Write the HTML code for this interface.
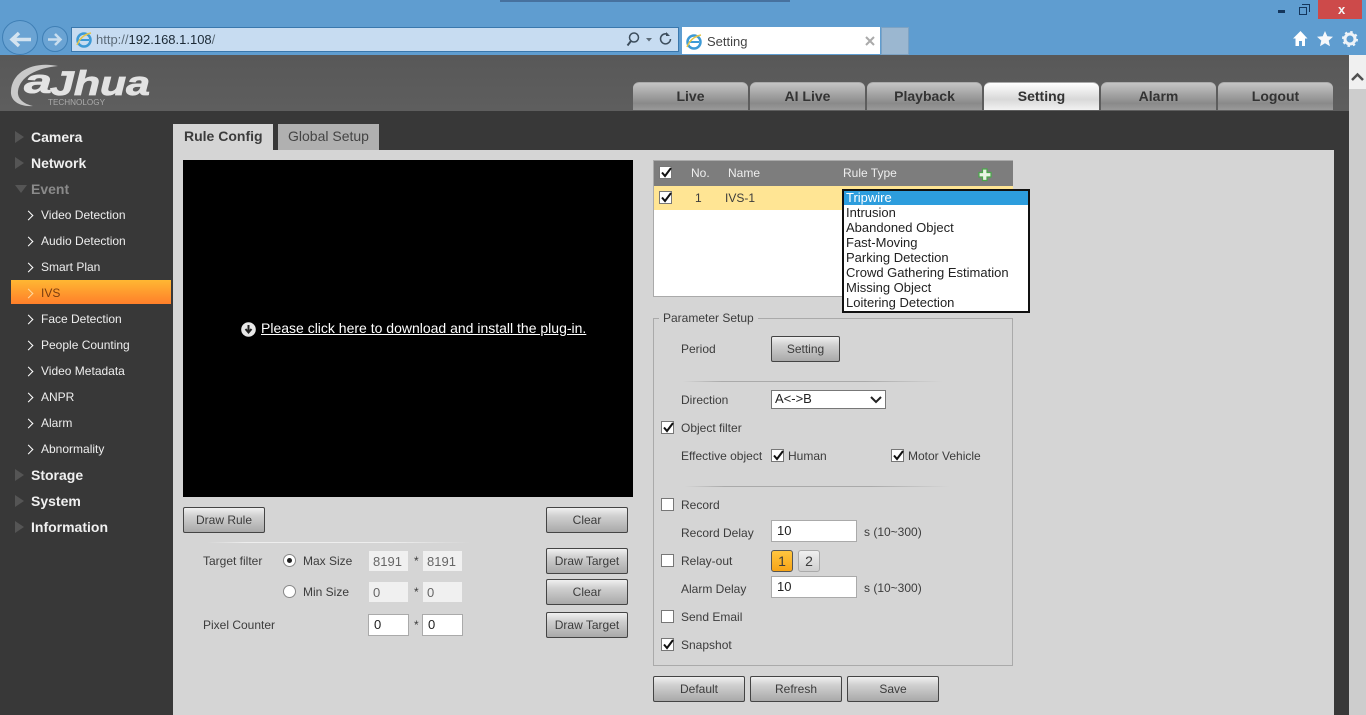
<!DOCTYPE html>
<html><head><meta charset="utf-8"><style>
html,body{margin:0;padding:0;width:1366px;height:715px;overflow:hidden;background:#383838}
body{position:relative;font-family:"Liberation Sans",sans-serif;font-size:12px;color:#3c3c3c}
.a,.t,.b,.cb,.i{position:absolute}
.t{white-space:nowrap;line-height:14px}
.m{font-size:14px;font-weight:bold;color:#f0f0f0;left:31px}
.s{font-size:12px;color:#eee;left:41px}
.b{box-sizing:border-box;border:1px solid #444;border-radius:2px;background:linear-gradient(#f0f0f0,#cfcfcf 35%,#a9a9a9);text-align:center;line-height:24px;height:26px;color:#3c3c3c}
.nav{position:absolute;top:82px;height:28px;width:115px;box-sizing:border-box;border-radius:6px 6px 0 0;background:linear-gradient(#c4c4c4,#8a8a8a 75%,#999);text-align:center;font-weight:bold;font-size:14px;line-height:27px;color:#333;border-top:1px solid #aaa}
.cb{box-sizing:border-box;width:13px;height:13px;background:#fff;border:1px solid #777}
.cb svg{position:absolute;left:0;top:-1px}
.i{box-sizing:border-box;background:#fff;border:1px solid #aaa;color:#222;height:22px;line-height:20px;padding-left:5px;font-size:13px}
.d{background:#f0f0f0;border:0;color:#666}
.ar{position:absolute;left:25px;width:6px;height:6px;border-top:1.5px solid #fff;border-right:1.5px solid #fff;transform:rotate(45deg)}
.tri{position:absolute;left:15px;width:0;height:0;border-left:9px solid #555;border-top:6px solid transparent;border-bottom:6px solid transparent}
.hr{position:absolute;height:1px;background:linear-gradient(90deg,#d5d5d5,#aaa 15%,#aaa 70%,#d5d5d5)}
.o{line-height:15px;height:15px;padding-left:2px;font-size:13px;color:#222}
</style></head><body>
<!-- browser chrome -->
<div class="a" style="left:0;top:0;width:1366px;height:55px;background:#5f9dd0"></div>
<div class="a" style="left:500px;top:0;width:290px;height:2px;background:#47719e"></div>
<div class="a" style="left:2px;top:20px;width:36px;height:35px;border:1px solid #3f7fb5;border-radius:50%;box-sizing:border-box;background:#6aa3d3"></div>
<div class="a" style="left:42px;top:26px;width:26px;height:26px;border:1px solid #3f7fb5;border-radius:50%;box-sizing:border-box;background:#6aa3d3"></div>
<svg class="a" style="left:0;top:0" width="80" height="55"><path d="M31 39.500H12M19 33l-7 6.500 7 6.500" fill="none" stroke="#d3e3f0" stroke-width="3.500"/><path d="M48 39.500h12M55 34l5.500 5.500L55 45" fill="none" stroke="#c9deef" stroke-width="2.500"/></svg>
<div class="a" style="left:71px;top:27px;width:608px;height:25px;background:#c7dcf1;border:1px solid #3a78ad;box-sizing:border-box"></div>
<svg class="a" style="left:75px;top:30px" width="18" height="19"><ellipse cx="9" cy="10" rx="6.500" ry="6.500" fill="none" stroke="#3d9ad6" stroke-width="2.500"/><path d="M4 10h10" stroke="#3d9ad6" stroke-width="2"/><path d="M2 15Q6 5 16 3" fill="none" stroke="#e5c64a" stroke-width="1.500"/></svg>
<div class="t" style="left:96px;top:33px;font-size:13px;color:#5c6b78">http://<span style="color:#1c2a36">192.168.1.108</span>/</div>
<svg class="a" style="left:624px;top:30px" width="50" height="19"><circle cx="10" cy="7.500" r="4.500" fill="none" stroke="#3d4e5d" stroke-width="1.500"/><path d="M7 11l-3.500 4.500" stroke="#3d4e5d" stroke-width="2"/><path d="M22 8h6l-3 3.500z" fill="#5c6b78"/><path d="M44 4.500a5 5 0 1 0 2.500 4.500" fill="none" stroke="#3d4e5d" stroke-width="1.500"/><path d="M42 2v4h4z" fill="#3d4e5d"/></svg>
<div class="a" style="left:682px;top:27px;width:198px;height:27px;background:#fff"></div>
<svg class="a" style="left:685px;top:32px" width="18" height="19"><ellipse cx="9" cy="10" rx="6.500" ry="6.500" fill="none" stroke="#3d9ad6" stroke-width="2.500"/><path d="M4 10h10" stroke="#3d9ad6" stroke-width="2"/><path d="M2 15Q6 5 16 3" fill="none" stroke="#e5c64a" stroke-width="1.500"/></svg>
<div class="t" style="left:707px;top:35px;font-size:13px;color:#444">Setting</div>
<svg class="a" style="left:865px;top:36px" width="10" height="10"><path d="M1 1l8 8M9 1l-8 8" stroke="#aaa" stroke-width="2"/></svg>
<div class="a" style="left:881px;top:27px;width:28px;height:28px;background:#9bb7d0;border:1px solid #7da3c4;box-sizing:border-box"></div>
<div class="a" style="left:1278px;top:10px;width:7px;height:3px;background:#14365c"></div>
<div class="a" style="left:1299px;top:7px;width:8px;height:8px;border:1.500px solid #14365c;box-sizing:border-box"></div>
<div class="a" style="left:1302px;top:4px;width:8px;height:8px;border-top:1.500px solid #14365c;border-right:1.500px solid #14365c;box-sizing:border-box"></div>
<div class="a" style="left:1318px;top:0;width:44px;height:19px;background:#cd4a4a"></div>
<div class="t" style="left:1338px;top:3px;font-size:13px;font-weight:bold;color:#f4f4f4">x</div>
<svg class="a" style="left:1292px;top:30px" width="68" height="18"><path d="M1 8.500 8.500 1l7 7.500h-2.500V16H10v-5H7v5H3.500V8.500z" fill="#fff"/><path d="M33 1l2.300 5.200 5.700.6-4.300 3.800 1.300 5.600-5-3-5 3 1.300-5.600L25 6.800l5.700-.6z" fill="#f6f8fb"/><circle cx="58" cy="9" r="5" fill="none" stroke="#eef3f8" stroke-width="3"/><circle cx="58" cy="9" r="7" fill="none" stroke="#eef3f8" stroke-width="2" stroke-dasharray="2.500 3"/></svg>

<!-- header -->
<div class="a" style="left:0;top:55px;width:1349px;height:56px;background:linear-gradient(#585858,#5e5e5e)"></div>
<svg class="a" style="left:0;top:55px" width="170" height="56">
<defs><linearGradient id="g" x1="0" y1="0" x2="0" y2="1"><stop offset="0" stop-color="#fbfbfb"/><stop offset="1" stop-color="#a4a4a4"/></linearGradient></defs>
<path d="M58 11C34 6 12 16 11 36 10 46 20 52 33 51 24 49 17 44 18 36 20 22 36 13 58 11z" fill="#c9c9c9"/>
<text x="24" y="38" font-family="Liberation Sans" font-weight="bold" font-style="italic" font-size="34" fill="#e4e4e4" stroke="#e4e4e4" stroke-width=".6" textLength="28" lengthAdjust="spacingAndGlyphs">a</text>
<text x="50" y="40" font-family="Liberation Sans" font-weight="bold" font-style="italic" font-size="34" fill="#e2e2e2" stroke="#e2e2e2" stroke-width=".8" textLength="100" lengthAdjust="spacingAndGlyphs">Jhua</text>
<text x="48" y="50" font-family="Liberation Sans" font-size="8.500" fill="#aaa" textLength="57" lengthAdjust="spacingAndGlyphs">TECHNOLOGY</text>
</svg>
<div class="nav" style="left:633px">Live</div>
<div class="nav" style="left:750px">AI Live</div>
<div class="nav" style="left:867px">Playback</div>
<div class="nav" style="left:984px;background:linear-gradient(#fff,#d8d8d8 60%,#f2f2f2)">Setting</div>
<div class="nav" style="left:1101px">Alarm</div>
<div class="nav" style="left:1218px">Logout</div>

<!-- scrollbar -->
<div class="a" style="left:1349px;top:55px;width:17px;height:660px;background:#f0f0f0"></div>
<div class="a" style="left:1349px;top:89px;width:17px;height:626px;background:#cdcdcd"></div>
<svg class="a" style="left:1349px;top:70px" width="17" height="14"><path d="M3 10l5.500-5.500L14 10" fill="none" stroke="#505050" stroke-width="2.500"/></svg>

<!-- left menu -->
<div class="tri" style="top:131px"></div><div class="t m" style="top:130px">Camera</div>
<div class="tri" style="top:157px"></div><div class="t m" style="top:156px">Network</div>
<div class="a" style="left:15px;top:185px;width:0;height:0;border-top:8px solid #555;border-left:6px solid transparent;border-right:6px solid transparent"></div><div class="t m" style="top:182px;color:#8a8a8a">Event</div>
<div class="a" style="left:11px;top:280px;width:160px;height:24px;background:linear-gradient(#ffb733,#ff7f2a)"></div>
<div class="ar" style="top:212px"></div><div class="t s" style="top:208px">Video Detection</div>
<div class="ar" style="top:238px"></div><div class="t s" style="top:234px">Audio Detection</div>
<div class="ar" style="top:264px"></div><div class="t s" style="top:260px">Smart Plan</div>
<div class="ar" style="top:290px;border-color:#ffd9a0"></div><div class="t s" style="top:286px;color:#7a3d10">IVS</div>
<div class="ar" style="top:316px"></div><div class="t s" style="top:312px">Face Detection</div>
<div class="ar" style="top:342px"></div><div class="t s" style="top:338px">People Counting</div>
<div class="ar" style="top:368px"></div><div class="t s" style="top:364px">Video Metadata</div>
<div class="ar" style="top:394px"></div><div class="t s" style="top:390px">ANPR</div>
<div class="ar" style="top:420px"></div><div class="t s" style="top:416px">Alarm</div>
<div class="ar" style="top:446px"></div><div class="t s" style="top:442px">Abnormality</div>
<div class="tri" style="top:469px"></div><div class="t m" style="top:468px">Storage</div>
<div class="tri" style="top:495px"></div><div class="t m" style="top:494px">System</div>
<div class="tri" style="top:521px"></div><div class="t m" style="top:520px">Information</div>

<!-- content -->
<div class="a" style="left:173px;top:150px;width:1161px;height:565px;background:#d5d5d5"></div>
<div class="a" style="left:173px;top:124px;width:100px;height:26px;background:#d5d5d5"></div>
<div class="t" style="left:184px;top:129px;font-size:14px;font-weight:bold;color:#3c3c3c">Rule Config</div>
<div class="a" style="left:278px;top:124px;width:101px;height:26px;background:#b0b0b0"></div>
<div class="t" style="left:288px;top:129px;font-size:14px;color:#444">Global Setup</div>

<!-- video -->
<div class="a" style="left:183px;top:160px;width:450px;height:337px;background:#000"></div>
<svg class="a" style="left:241px;top:322px" width="15" height="15"><circle cx="7.500" cy="7.500" r="7.300" fill="#e8e8e8"/><path d="M7.500 3v6M4.500 7l3 3.500 3-3.500" fill="none" stroke="#222" stroke-width="2"/></svg>
<div class="t" style="left:261px;top:321px;font-size:14px;color:#fff;text-decoration:underline">Please click here to download and install the plug-in.</div>

<!-- below video -->
<div class="b" style="left:183px;top:507px;width:82px">Draw Rule</div>
<div class="b" style="left:546px;top:507px;width:82px">Clear</div>
<div class="a" style="left:207px;top:542px;width:263px;height:1px;background:linear-gradient(90deg,#d5d5d5,#eee 15%,#eee 70%,#d5d5d5)"></div>
<div class="t" style="left:203px;top:554px">Target filter</div>
<div class="a" style="left:283px;top:554px;width:13px;height:13px;border:1px solid #888;border-radius:50%;background:#fff;box-sizing:border-box"></div>
<div class="a" style="left:287px;top:558px;width:5px;height:5px;border-radius:50%;background:#222"></div>
<div class="t" style="left:303px;top:554px">Max Size</div>
<div class="i d" style="left:369px;top:551px;width:39px;height:20px;line-height:21px;padding-left:4px">8191</div>
<div class="t" style="left:414px;top:554px">*</div>
<div class="i d" style="left:423px;top:551px;width:39px;height:20px;line-height:21px;padding-left:4px">8191</div>
<div class="a" style="left:283px;top:585px;width:13px;height:13px;border:1px solid #888;border-radius:50%;background:#fff;box-sizing:border-box"></div>
<div class="t" style="left:303px;top:585px">Min Size</div>
<div class="i d" style="left:369px;top:582px;width:39px;height:20px;line-height:21px;padding-left:4px">0</div>
<div class="t" style="left:414px;top:585px">*</div>
<div class="i d" style="left:423px;top:582px;width:39px;height:20px;line-height:21px;padding-left:4px">0</div>
<div class="t" style="left:203px;top:618px">Pixel Counter</div>
<div class="i" style="left:368px;top:614px;width:41px">0</div>
<div class="t" style="left:414px;top:618px">*</div>
<div class="i" style="left:422px;top:614px;width:41px">0</div>
<div class="b" style="left:546px;top:548px;width:82px">Draw Target</div>
<div class="b" style="left:546px;top:579px;width:82px">Clear</div>
<div class="b" style="left:546px;top:612px;width:82px">Draw Target</div>

<!-- rule table -->
<div class="a" style="left:653px;top:160px;width:360px;height:137px;background:#fff;border:1px solid #aaa;box-sizing:border-box"></div>
<div class="a" style="left:654px;top:161px;width:359px;height:25px;background:#7d7d7d"></div>
<div class="a" style="left:654px;top:186px;width:359px;height:24px;background:#ffe594"></div>
<div class="cb" style="left:659px;top:166px"><svg width="13" height="13"><path d="M2 6.500l3 3.500 6-8" fill="none" stroke="#111" stroke-width="2"/></svg></div>
<div class="t" style="left:691px;top:166px;color:#eee">No.</div>
<div class="t" style="left:728px;top:166px;color:#eee">Name</div>
<div class="t" style="left:843px;top:166px;color:#eee">Rule Type</div>
<svg class="a" style="left:978px;top:168px" width="14" height="14"><path d="M4.500 1h4.500v3.500H13V9H9v3.500H4.500V9H1V4.500h3.500z" fill="#eaf5e6" stroke="#4aa84a" stroke-width="1.200"/></svg>
<div class="cb" style="left:659px;top:191px;background:#fff"><svg width="13" height="13"><path d="M2 6.500l3 3.500 6-8" fill="none" stroke="#111" stroke-width="2"/></svg></div>
<div class="t" style="left:695px;top:191px">1</div>
<div class="t" style="left:725px;top:191px">IVS-1</div>

<!-- dropdown -->
<div class="a" style="left:842px;top:189px;width:188px;height:124px;box-sizing:border-box;border:2px solid #111;background:#fff">
<div class="o" style="background:#2d9ddd;color:#fff;height:14px;line-height:13px">Tripwire</div>
<div class="o">Intrusion</div><div class="o">Abandoned Object</div><div class="o">Fast-Moving</div><div class="o">Parking Detection</div><div class="o">Crowd Gathering Estimation</div><div class="o">Missing Object</div><div class="o">Loitering Detection</div>
</div>

<!-- parameter setup -->
<div class="a" style="left:653px;top:318px;width:360px;height:348px;border:1px solid #aaa;box-sizing:border-box"></div>
<div class="t" style="left:659px;top:311px;background:#d5d5d5;padding:0 4px">Parameter Setup</div>
<div class="t" style="left:681px;top:342px">Period</div>
<div class="b" style="left:771px;top:336px;width:69px">Setting</div>
<div class="hr" style="left:683px;top:381px;width:260px"></div>
<div class="t" style="left:681px;top:393px">Direction</div>
<div class="a" style="left:771px;top:390px;width:115px;height:19px;background:#fff;border:1px solid #777;box-sizing:border-box;font-size:13px;line-height:15px;padding-left:3px;color:#222">A&lt;-&gt;B</div>
<svg class="a" style="left:869px;top:395px" width="14" height="10"><path d="M2 2l5 5 5-5" fill="none" stroke="#222" stroke-width="2"/></svg>

<div class="cb" style="left:661px;top:421px"><svg width="13" height="13"><path d="M2 6.500l3 3.500 6-8" fill="none" stroke="#111" stroke-width="2"/></svg></div>
<div class="t" style="left:681px;top:421px">Object filter</div>
<div class="t" style="left:681px;top:449px">Effective object</div>
<div class="cb" style="left:771px;top:449px"><svg width="13" height="13"><path d="M2 6.500l3 3.500 6-8" fill="none" stroke="#111" stroke-width="2"/></svg></div>
<div class="t" style="left:788px;top:449px">Human</div>
<div class="cb" style="left:891px;top:449px"><svg width="13" height="13"><path d="M2 6.500l3 3.500 6-8" fill="none" stroke="#111" stroke-width="2"/></svg></div>
<div class="t" style="left:908px;top:449px">Motor Vehicle</div>
<div class="hr" style="left:685px;top:486px;width:265px"></div>
<div class="cb" style="left:661px;top:498px"></div>
<div class="t" style="left:681px;top:498px">Record</div>
<div class="t" style="left:681px;top:526px">Record Delay</div>
<div class="i" style="left:771px;top:520px;width:86px">10</div>
<div class="t" style="left:864px;top:525px">s (10~300)</div>
<div class="cb" style="left:661px;top:554px"></div>
<div class="t" style="left:681px;top:554px">Relay-out</div>
<div class="a" style="left:771px;top:550px;width:22px;height:22px;box-sizing:border-box;border:1px solid #555;border-radius:3px;background:linear-gradient(#ffc640,#f7a416);text-align:center;line-height:21px;font-size:14px">1</div>
<div class="a" style="left:798px;top:550px;width:22px;height:22px;box-sizing:border-box;border:1px solid #aaa;border-radius:3px;background:linear-gradient(#f0f0f0,#cfcfcf);text-align:center;line-height:20px;font-size:14px">2</div>
<div class="t" style="left:681px;top:582px">Alarm Delay</div>
<div class="i" style="left:771px;top:576px;width:86px">10</div>
<div class="t" style="left:864px;top:581px">s (10~300)</div>
<div class="cb" style="left:661px;top:610px"></div>
<div class="t" style="left:681px;top:610px">Send Email</div>
<div class="cb" style="left:661px;top:638px"><svg width="13" height="13"><path d="M2 6.500l3 3.500 6-8" fill="none" stroke="#111" stroke-width="2"/></svg></div>
<div class="t" style="left:681px;top:638px">Snapshot</div>
<div class="b" style="left:653px;top:676px;width:92px">Default</div>
<div class="b" style="left:750px;top:676px;width:92px">Refresh</div>
<div class="b" style="left:847px;top:676px;width:92px">Save</div>
</body></html>
